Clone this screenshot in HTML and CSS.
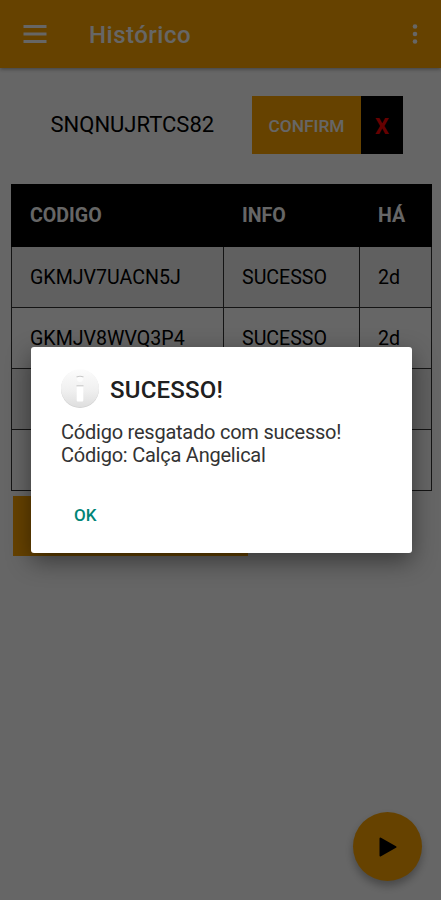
FILE: index.html
```html
<!DOCTYPE html>
<html lang="pt">
<head>
<meta charset="utf-8">
<title>Histórico</title>
<link rel="stylesheet" href="styles.css">
</head>
<body>
<header class="bar">
  <svg class="menu" viewBox="0 0 24 18"><path d="M0.5 1.5h23M0.5 9h23M0.5 16.5h23" stroke="currentColor" stroke-width="2.8"/></svg>
  <h1 class="title">Histórico</h1>
  <svg class="more" viewBox="0 0 6 22"><g fill="currentColor"><circle cx="3" cy="3.5" r="2.3"/><circle cx="3" cy="11" r="2.3"/><circle cx="3" cy="18.5" r="2.3"/></g></svg>
</header>
<main>
  <div class="entry">
    <span class="code">SNQNUJRTCS82</span>
    <button class="confirm">CONFIRM</button>
    <button class="clear">X</button>
  </div>
  <table class="history">
    <colgroup><col class="c1"><col class="c2"><col class="c3"></colgroup>
    <thead><tr><th>CODIGO</th><th>INFO</th><th>HÁ</th></tr></thead>
    <tbody>
      <tr><td>GKMJV7UACN5J</td><td>SUCESSO</td><td>2d</td></tr>
      <tr><td>GKMJV8WVQ3P4</td><td>SUCESSO</td><td>2d</td></tr>
      <tr><td></td><td></td><td></td></tr>
      <tr><td></td><td></td><td></td></tr>
    </tbody>
  </table>
  <div class="action"></div>
</main>
<div class="fab"><svg viewBox="0 0 18 20"><path d="M1.5 1.5L16.5 10L1.5 18.5Z" fill="#000" stroke="#000" stroke-width="2" stroke-linejoin="round"/></svg></div>
<div class="overlay">
  <section class="dialog">
    <div class="heading">
      <svg class="info" viewBox="0 0 40 40">
        <defs>
          <linearGradient id="disc" x1="0" y1="0" x2="0" y2="1"><stop offset="0" stop-color="#fcfcfc"/><stop offset=".55" stop-color="#f0f0f0"/><stop offset="1" stop-color="#dedede"/></linearGradient>
        </defs>
        <circle cx="20" cy="20" r="19" fill="#d2d2d2"/>
        <circle cx="20" cy="19.3" r="19" fill="url(#disc)"/>
        <path d="M16.5 8.1Q20 5.8 23.5 8.1L22.5 12Q20 14 17.5 12Z" fill="#fcfcfc"/>
        <path d="M16.5 8.1Q20 6.3 23.5 8.1" fill="none" stroke="#c8c8c8" stroke-width="1.1"/>
        <rect x="16.7" y="17" width="6.6" height="15.5" rx="1" fill="#fff"/>
        <path d="M16.5 16.8h7" stroke="#c8c8c8" stroke-width="1.1"/>
      </svg>
      <h2>SUCESSO!</h2>
    </div>
    <p class="message">Código resgatado com sucesso!<br>Código: Calça Angelical</p>
    <span class="ok">OK</span>
  </section>
</div>
</body>
</html>
```
FILE: styles.css
```css
* { box-sizing: border-box; }
body { margin: 0; height: 900px; overflow: hidden; background: #fff; font-family: Roboto, sans-serif; color: #000; }
.bar { height: 68px; background: #ffa500; color: #fff; display: flex; align-items: center; padding: 0 23px; box-shadow: 0 1px 4px rgba(0,0,0,.4); }
.menu { width: 24px; height: 18px; flex: none; }
.title { margin: 2px 0 0 42px; font-size: 24px; line-height: 28px; font-weight: 500; letter-spacing: .5px; }
.more { width: 6px; height: 22px; margin-left: auto; }
.entry { display: flex; height: 58px; margin: 28px 38px 0 50px; }
.code { width: 202px; padding-left: .5px; font-size: 22px; line-height: 58px; }
.entry button { border: 0; padding: 2px 0 0; font-family: inherit; }
.confirm { width: 109px; background: #ffa500; color: #fff; font-size: 17.3px; font-weight: 500; }
.clear { width: 42px; background: #000; color: #f00; font-size: 22px; font-weight: 700; }
.history { margin: 30px 0 0 11px; width: 420px; table-layout: fixed; border-collapse: collapse; border: 1px solid #333; font-size: 19.6px; }
.c1 { width: 212px; }
.c2 { width: 136px; }
.c3 { width: 72px; }
.history tr { height: 61px; }
.history thead tr { height: 62px; }
.history th, .history td { padding: 1px 0 0 18px; text-align: left; border: 1px solid #333; }
.history th { background: #000; color: #fff; font-weight: 700; border-color: #000; padding-bottom: 1px; }
.history tbody tr:nth-child(odd) { background: #f1f1f1; }
.action { width: 235px; height: 60px; margin: 5px 0 0 13px; background: #ffa500; }
.fab { position: absolute; left: 353px; top: 812px; width: 69px; height: 69px; border-radius: 50%; background: #ffa500; box-shadow: 0 5px 9px rgba(0,0,0,.3); display: flex; align-items: center; justify-content: center; }
.fab svg { width: 18px; height: 20px; }
.overlay { position: absolute; inset: 0; background: rgba(0,0,0,.6); display: flex; align-items: center; justify-content: center; padding-left: 2px; }
.dialog { width: 381px; height: 206px; background: #fff; border-radius: 3px; padding: 22px 30px; box-shadow: 0 8px 24px rgba(0,0,0,.45); }
.heading { display: flex; align-items: center; height: 40px; }
.info { width: 40px; height: 40px; margin-left: -1px; }
.heading h2 { margin: 2px 0 0 10px; font-size: 24px; line-height: 30px; font-weight: 500; letter-spacing: .2px; color: #202020; }
.message { margin: 12px 0 0; font-size: 20px; line-height: 23px; letter-spacing: -.23px; color: #333; }
.ok { display: block; margin: 36px 0 0 13px; font-size: 17px; line-height: 24px; font-weight: 500; color: #008577; }
```
